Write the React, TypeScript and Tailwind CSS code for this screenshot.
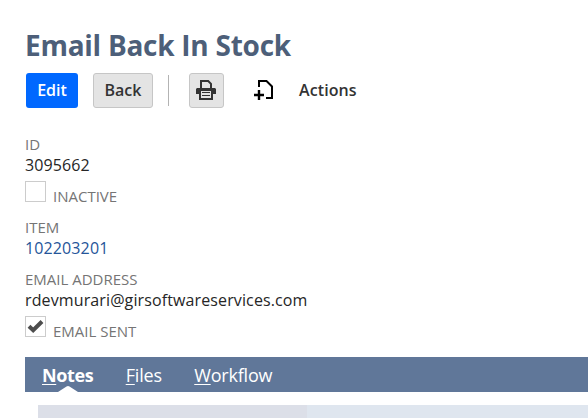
import type { ReactNode } from "react";

function Field({ label, children, link = false }: { label: string; children: ReactNode; link?: boolean }) {
  return (
    <div className="flex flex-col">
      <span className="h-[21px] text-[15px] leading-[21px] text-[#757575]">{label}</span>
      <span className={link ? "h-[20px] text-[16px] leading-[20px] tracking-[0.12px] text-[#255599]" : "h-[20px] text-[16px] leading-[20px] tracking-[0.12px] text-[#262626]"}>
        {children}
      </span>
    </div>
  );
}

function CheckField({ label, checked = false }: { label: string; checked?: boolean }) {
  return (
    <div className="flex h-[26px] items-start gap-[7px]">
      <span className="flex size-[21px] items-center justify-center border border-[#cccccc] bg-white">
        {checked && (
          <svg width="17" height="15" viewBox="0 0 17 15" fill="none" stroke="#4d4d4d" strokeWidth="4">
            <path d="M2 7.2L6.2 11.2L15 2.5" />
          </svg>
        )}
      </span>
      <span className="mt-[5px] text-[15px] leading-[21px] text-[#757575]">{label}</span>
    </div>
  );
}

function Tab({ label, active = false }: { label: string; active?: boolean }) {
  return (
    <div className={active ? "relative h-full font-bold tracking-[-0.4px]" : "relative h-full tracking-[-0.2px]"}>
      <span className="underline decoration-1 underline-offset-[2px]">{label[0]}</span>
      {label.slice(1)}
      {active && (
        <svg className="absolute bottom-0 left-[16px]" width="20" height="6" viewBox="0 0 20 6" fill="#fff">
          <path d="M0 6L8.5 .4Q10 -.4 11.5 .4L20 6Z" />
        </svg>
      )}
    </div>
  );
}

export default function App() {
  return (
    <main className="flex h-[418px] w-[588px] flex-col overflow-hidden bg-white pl-[25px] font-['Open_Sans',sans-serif]">
      <h1 className="mt-[25px] h-[40px] text-[28px] leading-[40px] font-bold tracking-[-0.26px] whitespace-nowrap text-[#4d5f79]">Email Back In Stock</h1>
      <div className="mt-[8px] ml-px flex h-[35px] items-center text-[16px] font-semibold text-[#333333]">
        <button className="h-[35px] w-[52px] rounded-[3px] bg-[#0068ff] pb-[2px] text-white">Edit</button>
        <button className="ml-[15px] h-[35px] w-[60px] rounded-[3px] border border-[#c6c6c6] bg-[#e4e4e4] pb-[2px]">Back</button>
        <span className="ml-[15px] h-[31px] w-px bg-[#b3b3b3]" />
        <button aria-label="Print" className="ml-[20px] flex size-[35px] items-center justify-center rounded-[3px] border border-[#c6c6c6] bg-[#e4e4e4] pr-px pb-px">
          <svg width="20" height="20" viewBox="0 0 20 20">
            <path d="M5 8V1H12.2L15 3.8V8" fill="none" stroke="#333" strokeWidth="2" />
            <path d="M1 8H19L20 9V14H0V9Z" fill="#333" />
            <path d="M3 11H17V20H3Z" fill="#333" />
            <path d="M5 11H15V18H5Z" fill="#e4e4e4" />
            <path d="M6 12.5H14M6 15.5H14" stroke="#333" strokeWidth="1" />
          </svg>
        </button>
        <button aria-label="New" className="ml-[30px] pb-px">
          <svg width="19" height="20" viewBox="0 0 19 20" fill="none" stroke="#000" strokeWidth="2">
            <path d="M5 7V1H12.5L18 6.5V18H12" />
            <path d="M5 10V20M0 15H10" strokeWidth="2.4" />
          </svg>
        </button>
        <button className="ml-[26px] pb-[2px] tracking-[0.1px]">Actions</button>
      </div>

      <section className="mt-[26px] flex flex-col">
        <Field label="ID">3095662</Field>
        <div className="mt-[6px]"><CheckField label="INACTIVE" /></div>
        <div className="mt-[10px]"><Field label="ITEM" link>102203201</Field></div>
        <div className="mt-[11px]"><Field label="EMAIL ADDRESS">rdevmurari@girsoftwareservices.com</Field></div>
        <div className="mt-[6px]"><CheckField label="EMAIL SENT" checked /></div>
      </section>

      <nav className="mt-[15px] flex h-[35px] shrink-0 gap-[32.5px] bg-[#607799] pl-[17px] text-[18px] leading-[36px] text-white">
        <Tab label="Notes" active />
        <Tab label="Files" />
        <Tab label="Workflow" />
      </nav>
      <div className="mt-[13px] ml-[13px] flex h-[13px] shrink-0">
        <div className="w-[269px] bg-[#dcdfe8]" />
        <div className="flex-1 bg-[#dfe6ef]" />
      </div>
    </main>
  );
}
